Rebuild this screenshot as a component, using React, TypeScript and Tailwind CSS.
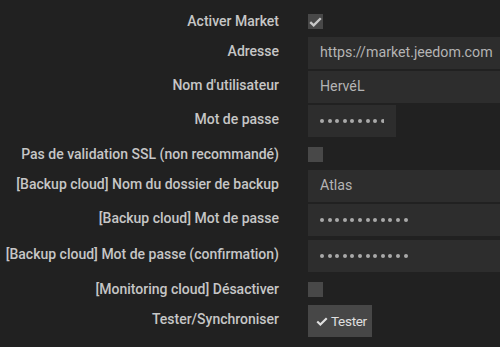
type Row =
  | { kind: "check"; label: string; checked: boolean; mt: string; h: string }
  | { kind: "text"; label: string; value: string; mt: string }
  | { kind: "password"; label: string; dots: number; narrow?: boolean; mt: string }
  | { kind: "button"; label: string; mt: string };

const rows: Row[] = [
  { kind: "check", label: "Activer Market", checked: true, mt: "mt-[7px]", h: "h-[29px]" },
  { kind: "text", label: "Adresse", value: "https://market.jeedom.com", mt: "mt-[1px]" },
  { kind: "text", label: "Nom d'utilisateur", value: "HervéL", mt: "mt-[2px]" },
  { kind: "password", label: "Mot de passe", dots: 9, narrow: true, mt: "mt-[2px]" },
  { kind: "check", label: "Pas de validation SSL (non recommandé)", checked: false, mt: "mt-[2px]", h: "h-[31px]" },
  { kind: "text", label: "[Backup cloud] Nom du dossier de backup", value: "Atlas", mt: "mt-0" },
  { kind: "password", label: "[Backup cloud] Mot de passe", dots: 12, mt: "mt-[2px]" },
  { kind: "password", label: "[Backup cloud] Mot de passe (confirmation)", dots: 12, mt: "mt-[4px]" },
  { kind: "check", label: "[Monitoring cloud] Désactiver", checked: false, mt: "mt-[2px]", h: "h-[31px]" },
  { kind: "button", label: "Tester/Synchroniser", mt: "mt-0" },
];

function CheckMark({ className }: { className: string }) {
  return (
    <svg viewBox="0 0 14 11" className={className} fill="none" stroke="currentColor" strokeWidth={2.6}>
      <path d="M1.2 5.6 L5 9.2 L12.8 1.4" />
    </svg>
  );
}

function Dots({ count }: { count: number }) {
  return (
    <div className="flex gap-[3.6px] overflow-hidden">
      {Array.from({ length: count }).map((_, i) => (
        <span key={i} className="h-[4px] w-[4px] shrink-0 rounded-full bg-[#a9a9a9]" />
      ))}
    </div>
  );
}

function Control({ row }: { row: Row }) {
  if (row.kind === "check") {
    return (
      <div className="flex h-[15px] w-[15px] items-center justify-center bg-[#484848]">
        {row.checked && <CheckMark className="h-[10px] w-[13px] text-[#c8c8c8]" />}
      </div>
    );
  }
  if (row.kind === "text") {
    return (
      <div className="flex h-[32px] w-full items-center bg-[#2d2d2d] px-[12px] text-[14.2px] text-[#b4b4b4]">
        {row.value}
      </div>
    );
  }
  if (row.kind === "password") {
    return (
      <div className={`flex h-[32px] items-center bg-[#2d2d2d] px-[12px] ${row.narrow ? "w-[88px]" : "w-full"}`}>
        <Dots count={row.dots} />
      </div>
    );
  }
  return (
    <button className="flex h-[32px] w-[64px] items-center gap-[3px] bg-[#474747] pl-[8px] text-[13.5px] tracking-[-0.3px] text-[#e0e0e0]">
      <CheckMark className="h-[9px] w-[12px] shrink-0" />
      Tester
    </button>
  );
}

export default function App() {
  return (
    <div className="h-[347px] w-[500px] overflow-hidden bg-[#212121] font-['Roboto',sans-serif]">
      {rows.map((row, i) => {
        const h = row.kind === "check" ? row.h : "h-[32px]";
        const pad = row.kind === "check" ? "pb-[1px]" : "pb-[3px]";
        return (
          <div key={i} className={`grid grid-cols-[279px_1fr] gap-x-[29px] ${row.mt} ${h}`}>
            <div className={`flex items-center justify-end whitespace-nowrap text-[14px] font-medium text-[#c6c6c6] ${pad}`}>
              {row.label}
            </div>
            <div className="flex items-center">
              <Control row={row} />
            </div>
          </div>
        );
      })}
    </div>
  );
}
